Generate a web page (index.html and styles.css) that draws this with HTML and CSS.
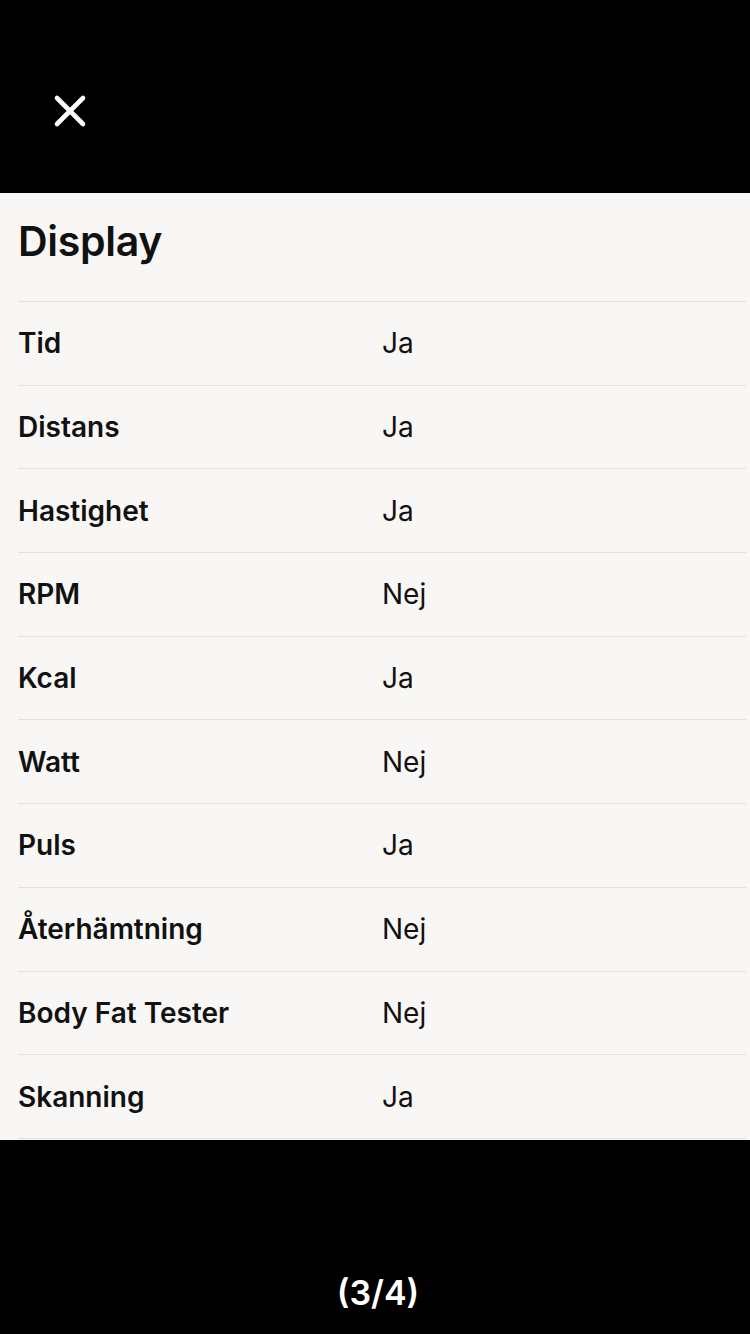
FILE: index.html
```html
<!DOCTYPE html>
<html lang="sv">
<head>
<meta charset="utf-8">
<title>Display</title>
<link rel="stylesheet" href="styles.css">
</head>
<body>
<div class="screen">
  <header class="topbar">
    <button class="close" aria-label="Stäng">
      <svg width="34" height="34" viewBox="0 0 34 34"><path d="M4 4 L30 30 M30 4 L4 30" stroke="#fff" stroke-width="4.6" stroke-linecap="round" fill="none"/></svg>
    </button>
  </header>
  <main class="panel">
    <h1 class="title">Display</h1>
    <div class="table">
      <div class="row"><span class="label">Tid</span><span class="value">Ja</span></div>
      <div class="row"><span class="label">Distans</span><span class="value">Ja</span></div>
      <div class="row"><span class="label">Hastighet</span><span class="value">Ja</span></div>
      <div class="row"><span class="label">RPM</span><span class="value">Nej</span></div>
      <div class="row"><span class="label">Kcal</span><span class="value">Ja</span></div>
      <div class="row"><span class="label">Watt</span><span class="value">Nej</span></div>
      <div class="row"><span class="label">Puls</span><span class="value">Ja</span></div>
      <div class="row"><span class="label">Återhämtning</span><span class="value">Nej</span></div>
      <div class="row"><span class="label">Body Fat Tester</span><span class="value">Nej</span></div>
      <div class="row"><span class="label">Skanning</span><span class="value">Ja</span></div>
    </div>
  </main>
  <footer class="bottombar">
    <span class="counter">(3/4)</span>
  </footer>
</div>
</body>
</html>
```
FILE: styles.css
```css
html, body {
  margin: 0;
  padding: 0;
  background: #000;
}
body {
  font-family: Inter, "Noto Sans", "Liberation Sans", sans-serif;
  color: #111;
}
.screen {
  width: 750px;
  height: 1334px;
  display: flex;
  flex-direction: column;
}
.topbar {
  height: 193px;
  background: #000;
  display: flex;
  align-items: flex-start;
  padding-left: 53px;
  padding-top: 94px;
  box-sizing: border-box;
}
.close {
  background: none;
  border: 0;
  padding: 0;
  width: 34px;
  height: 34px;
  display: block;
}
.close svg { display: block; }
.panel {
  background: #f8f7f5;
  height: 947px;
  padding-left: 18px;
  padding-right: 4px;
  box-sizing: border-box;
}
.title {
  margin: 0;
  height: 108px;
  box-sizing: border-box;
  padding-top: 20px;
  font-size: 41px;
  font-weight: 600;
  line-height: 56px;
  letter-spacing: -0.3px;
  color: #111;
}
.table {
  border-bottom: 1px solid #e2e1df;
}
.row {
  height: 83.7px;
  box-sizing: border-box;
  border-top: 1px solid #e2e1df;
  display: flex;
  align-items: center;
  font-size: 28px;
}
.label {
  width: 364px;
  font-weight: 600;
}
.value {
  font-weight: 400;
}
.bottombar {
  flex: 1;
  background: #000;
  display: flex;
  justify-content: center;
  align-items: flex-start;
  padding-top: 134px;
  padding-left: 6px;
}
.counter {
  color: #fff;
  font-size: 34px;
  font-weight: 600;
  line-height: 38px;
}
```
